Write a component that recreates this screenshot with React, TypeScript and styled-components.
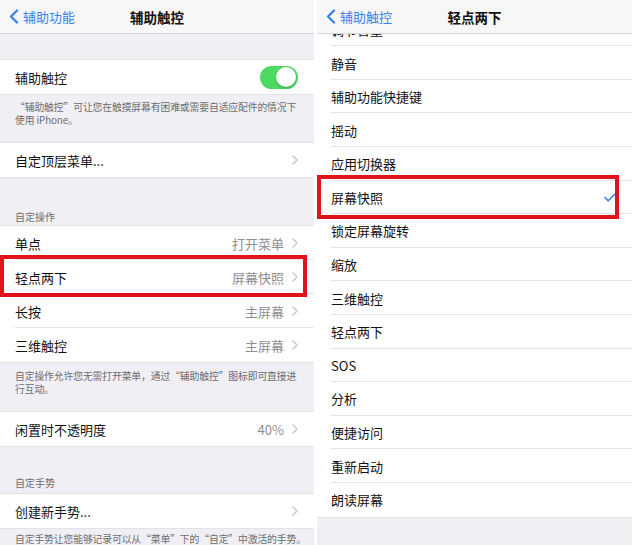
import React from 'react';
import styled, { createGlobalStyle } from 'styled-components';

const GlobalStyle = createGlobalStyle`
  html, body {
    margin: 0;
    padding: 0;
    background: #fff;
  }
  body {
    font-family: "Noto Sans CJK SC", "Noto Sans", sans-serif;
  }
`;

const Page = styled.div`
  display: flex;
  gap: 3px;
  width: 640px;
  height: 545px;
  overflow: hidden;
`;

const Panel = styled.div<{ $width: number }>`
  width: ${p => p.$width}px;
  flex-shrink: 0;
  height: 100%;
  display: flex;
  flex-direction: column;
  background: #efeff4;
  overflow: hidden;
`;

const NavBar = styled.div`
  height: 33px;
  flex-shrink: 0;
  display: grid;
  grid-template-columns: 1fr auto 1fr;
  align-items: center;
  background: #f7f7f7;
  border-bottom: 1px solid #d8d8dc;
  position: relative;
  z-index: 3;
`;

const BackButton = styled.div`
  display: flex;
  align-items: center;
  gap: 4px;
  padding-left: 9px;
  color: #3a80ee;
  font-size: 13px;
`;

const NavTitle = styled.div`
  font-size: 13.5px;
  font-weight: 600;
  color: #111;
`;

const Content = styled.div`
  flex: 1;
  display: flex;
  flex-direction: column;
`;

const Viewport = styled.div`
  flex: 1;
  overflow: hidden;
  position: relative;
  z-index: 1;
`;

const ScrolledList = styled.div<{ $offset: number }>`
  margin-top: ${p => -p.$offset}px;
`;

const Spacer = styled.div<{ $h: number }>`
  height: ${p => p.$h}px;
  flex-shrink: 0;
`;

const Group = styled.div`
  background: #fff;
  box-shadow: 0 -1px 0 #e3e3e7, 0 1px 0 #e3e3e7;
`;

interface Box {
  top: number;
  right: number;
  bottom: number;
  left: number;
}

const Row = styled.div<{ $h: number; $inset: number; $box?: Box }>`
  position: relative;
  height: ${p => p.$h}px;
  flex-shrink: 0;
  display: flex;
  align-items: center;
  gap: 8px;
  padding: 0 16px 0 ${p => p.$inset}px;
  font-size: 13px;
  color: #111;
  white-space: nowrap;

  &:not(:last-child)::before {
    content: '';
    position: absolute;
    left: ${p => p.$inset}px;
    right: 0;
    bottom: 0;
    height: 1px;
    background: #e4e4e7;
  }

  ${p =>
    p.$box &&
    `
    z-index: 2;
    &::after {
      content: '';
      position: absolute;
      top: ${p.$box.top}px;
      right: ${p.$box.right}px;
      bottom: ${p.$box.bottom}px;
      left: ${p.$box.left}px;
      border: 4px solid #e3131c;
      pointer-events: none;
    }
  `}
`;

const Label = styled.span`
  flex: 1;
`;

const Value = styled.span`
  color: #8e8e93;
  font-size: 13px;
`;

const SectionHeader = styled.div<{ $top: number; $bottom: number }>`
  padding: ${p => p.$top}px 15px ${p => p.$bottom}px;
  font-size: 10px;
  line-height: 13px;
  color: #6d6d72;
`;

const Footer = styled.div<{ $top: number; $bottom: number }>`
  padding: ${p => p.$top}px 15px ${p => p.$bottom}px;
  font-size: 9.8px;
  line-height: 12.5px;
  letter-spacing: -0.1px;
  color: #6d6d72;
  white-space: nowrap;
  flex-shrink: 0;
`;

const Switch = styled.div<{ $on: boolean }>`
  width: 38px;
  height: 23px;
  border-radius: 12px;
  background: ${p => (p.$on ? '#4cd964' : '#e5e5ea')};
  position: relative;
  flex-shrink: 0;

  &::after {
    content: '';
    position: absolute;
    top: 1.5px;
    left: ${p => (p.$on ? '16px' : '1.5px')};
    width: 20px;
    height: 20px;
    border-radius: 50%;
    background: #fff;
    box-shadow: 0 1px 2px rgba(0, 0, 0, 0.25);
  }
`;

const BackChevron = () => (
  <svg width="10" height="15" viewBox="0 0 10 15">
    <path d="M8 1.5L2 7.5l6 6" fill="none" stroke="#3a80ee" strokeWidth="2.3" strokeLinecap="round" strokeLinejoin="round" />
  </svg>
);

const Chevron = () => (
  <svg width="6" height="10" viewBox="0 0 6 10">
    <path d="M1 1l4 4-4 4" fill="none" stroke="#c4c4c9" strokeWidth="1.4" strokeLinecap="round" strokeLinejoin="round" />
  </svg>
);

const Check = () => (
  <svg width="12" height="9" viewBox="0 0 12 9">
    <path d="M1 4.6l3.2 3.2L11 1" fill="none" stroke="#3a80ee" strokeWidth="1.6" strokeLinecap="round" strokeLinejoin="round" />
  </svg>
);

interface NavProps {
  back: string;
  title: string;
}

const Nav: React.FC<NavProps> = ({ back, title }) => (
  <NavBar>
    <BackButton>
      <BackChevron />
      {back}
    </BackButton>
    <NavTitle>{title}</NavTitle>
    <span />
  </NavBar>
);

interface LinkRowProps {
  label: string;
  value?: string;
  box?: Box;
}

const LinkRow: React.FC<LinkRowProps> = ({ label, value, box }) => (
  <Row $h={34} $inset={15} $box={box}>
    <Label>{label}</Label>
    {value && <Value>{value}</Value>}
    <Chevron />
  </Row>
);

const actions = [
  { label: '单点', value: '打开菜单' },
  { label: '轻点两下', value: '屏幕快照', box: { top: -5, right: 7, bottom: -3, left: 0 } },
  { label: '长按', value: '主屏幕' },
  { label: '三维触控', value: '主屏幕' },
];

const doubleTapOptions = [
  '调节音量',
  '静音',
  '辅助功能快捷键',
  '摇动',
  '应用切换器',
  '屏幕快照',
  '锁定屏幕旋转',
  '缩放',
  '三维触控',
  '轻点两下',
  'SOS',
  '分析',
  '便捷访问',
  '重新启动',
  '朗读屏幕',
];

const selected = '屏幕快照';

const AssistiveTouchPanel = () => (
  <Panel $width={314}>
    <Nav back="辅助功能" title="辅助触控" />
    <Content>
      <Spacer $h={26} />
      <Group>
        <Row $h={34} $inset={15}>
          <Label>辅助触控</Label>
          <Switch $on />
        </Row>
      </Group>
      <Footer $top={7} $bottom={17}>
        “辅助触控”可让您在触摸屏幕有困难或需要自适应配件的情况下
        <br />
        使用 iPhone。
      </Footer>
      <Group>
        <LinkRow label="自定顶层菜单..." />
      </Group>
      <SectionHeader $top={33} $bottom={3}>
        自定操作
      </SectionHeader>
      <Group>
        {actions.map(a => (
          <LinkRow key={a.label} label={a.label} value={a.value} box={a.box} />
        ))}
      </Group>
      <Footer $top={8} $bottom={17}>
        自定操作允许您无需打开菜单，通过“辅助触控”图标即可直接进
        <br />
        行互动。
      </Footer>
      <Group>
        <LinkRow label="闲置时不透明度" value="40%" />
      </Group>
      <SectionHeader $top={30} $bottom={5}>
        自定手势
      </SectionHeader>
      <Group>
        <LinkRow label="创建新手势..." />
      </Group>
      <Footer $top={5} $bottom={10}>
        自定手势让您能够记录可以从“菜单”下的“自定”中激活的手势。
      </Footer>
    </Content>
  </Panel>
);

const DoubleTapPanel = () => (
  <Panel $width={315}>
    <Nav back="辅助触控" title="轻点两下" />
    <Viewport>
      <ScrolledList $offset={21.4}>
        <Group>
          {doubleTapOptions.map(option => (
            <Row
              key={option}
              $h={33.6}
              $inset={14}
              $box={option === selected ? { top: -6, right: 13, bottom: -5, left: 0 } : undefined}
            >
              <Label>{option}</Label>
              {option === selected && <Check />}
            </Row>
          ))}
        </Group>
      </ScrolledList>
    </Viewport>
  </Panel>
);

const App = () => (
  <>
    <GlobalStyle />
    <Page>
      <AssistiveTouchPanel />
      <DoubleTapPanel />
    </Page>
  </>
);

export default App;
